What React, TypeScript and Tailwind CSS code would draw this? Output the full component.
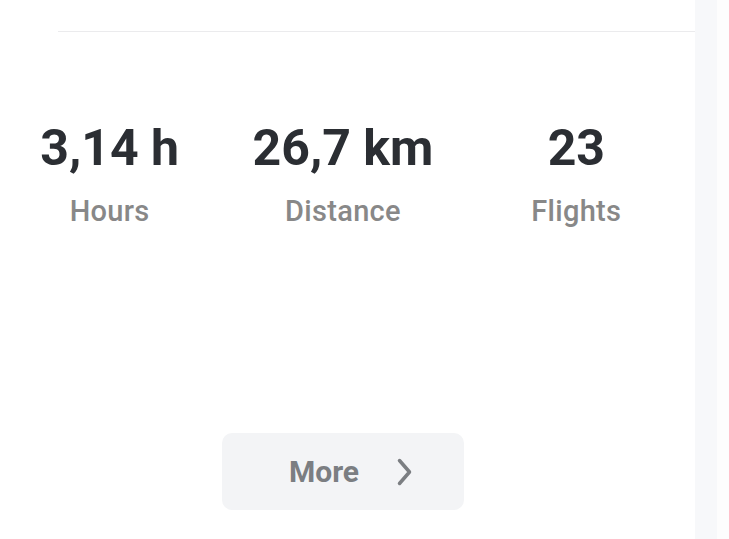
const stats = [
  { value: "3,14 h", label: "Hours" },
  { value: "26,7 km", label: "Distance" },
  { value: "23", label: "Flights" },
];

export default function App() {
  return (
    <div className="flex h-[539px] w-[729px] overflow-hidden bg-white font-['Roboto',sans-serif]">
      <div className="w-[695px] shrink-0 bg-white">
        <div className="ml-[58px] mt-[31px] h-px bg-[#ebebed]" />

        <div className="-ml-[7px] w-[700px]">
          <div className="mt-[91px] grid grid-cols-3">
            {stats.map((s) => (
              <div key={s.label} className="flex flex-col items-center">
                <span className="text-[50px] font-bold leading-none text-[#2b2e33]">
                  {s.value}
                </span>
                <span className="mt-[24px] text-[29px] font-medium leading-none tracking-[0.3px] text-[#888888]">
                  {s.label}
                </span>
              </div>
            ))}
          </div>

          <div className="mt-[207px] flex justify-center">
            <button className="flex h-[77px] w-[242px] items-center justify-center gap-[38px] rounded-[10px] bg-[#f3f4f6] pl-[16px]">
              <span className="text-[30px] font-bold leading-none text-[#7b7e82]">More</span>
              <svg width="16" height="28" viewBox="0 0 16 28" fill="none">
                <path
                  d="M2.5 2.5l10 11.5-10 11.5"
                  stroke="#7b7e82"
                  strokeWidth="3.5"
                  strokeLinecap="round"
                  strokeLinejoin="round"
                />
              </svg>
            </button>
          </div>
        </div>
      </div>
      <div className="w-[22px] shrink-0 bg-[#f7f8fa]" />
      <div className="flex-1 bg-[#fdfdfd]" />
    </div>
  );
}
